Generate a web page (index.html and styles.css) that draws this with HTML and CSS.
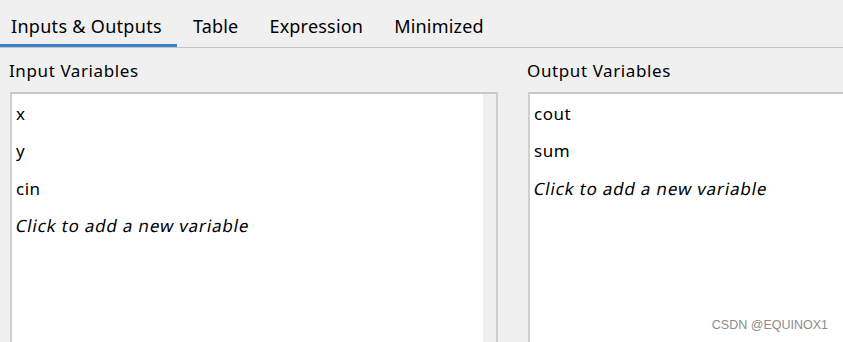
FILE: index.html
```html
<!DOCTYPE html>
<html lang="en">
<head>
    <meta charset="UTF-8">
    <meta name="viewport" content="width=device-width, initial-scale=1.0">
    <title>Inputs &amp; Outputs</title>
    <link rel="stylesheet" href="styles.css">
</head>
<body>

    <!-- Tabs -->
    <div class="tabs">
        <div class="tab active">Inputs &amp; Outputs</div>
        <div class="tab">Table</div>
        <div class="tab">Expression</div>
        <div class="tab">Minimized</div>
    </div>

    <!-- Variable Panels -->
    <div class="panels">
        <div class="panel">
            <div class="panel-label">Input Variables</div>
            <div class="var-box with-scroll">
                <div class="var-list">
                    <div class="var-row">x</div>
                    <div class="var-row">y</div>
                    <div class="var-row">cin</div>
                    <div class="var-row add"><span>Click to add a new variable</span></div>
                </div>
                <div class="scroll-track"></div>
            </div>
        </div>

        <div class="panel">
            <div class="panel-label">Output Variables</div>
            <div class="var-box open-right">
                <div class="var-list">
                    <div class="var-row">cout</div>
                    <div class="var-row">sum</div>
                    <div class="var-row add"><span>Click to add a new variable</span></div>
                </div>
            </div>
        </div>
    </div>

    <div class="watermark">CSDN @EQUINOX1</div>

</body>
</html>
```

FILE: styles.css
```css
/* Global */
* {
    margin: 0;
    padding: 0;
    box-sizing: border-box;
}

body {
    background: #f0f0f0;
    color: #000;
    font-family: "Noto Sans", "Open Sans", sans-serif;
    height: 342px;
    overflow: hidden;
    position: relative;
}

/* Tabs */
.tabs {
    display: flex;
    height: 48px;
    border-bottom: 1px solid #c4c4c4;
    margin-left: -5px;
}

.tab {
    font-size: 18px;
    line-height: 20px;
    letter-spacing: 0.2px;
    padding: 16px 15px 0 16px;
    height: 47px;
    border-bottom: 3px solid transparent;
}

.tab.active {
    border-bottom-color: #3d80c8;
    letter-spacing: 0.3px;
}

/* Panels */
.panels {
    display: grid;
    grid-template-columns: 488px 1fr;
    column-gap: 30px;
    padding: 13px 0 0 10px;
}

.panel-label {
    font-size: 17px;
    line-height: 20px;
    letter-spacing: 0.6px;
    margin: 0 0 11px -1px;
}

.var-box {
    display: flex;
    height: 251px;
    background: #fff;
    border: 2px solid #cfcfcf;
    border-top-color: #c8c8c8;
    border-bottom: none;
}

.var-box.open-right {
    border-right: none;
}

.var-list {
    flex: 1;
    padding-top: 1px;
}

.var-row {
    height: 37.4px;
    line-height: 37.4px;
    padding-left: 4px;
    font-size: 17px;
    letter-spacing: 0.5px;
}

/* slanted regular face, wider than the real italic */
.var-row.add span {
    display: inline-block;
    transform: skewX(-11deg);
    letter-spacing: 0.8px;
}

.scroll-track {
    width: 13px;
    background: #f0f0f0;
}

/* Watermark */
.watermark {
    position: absolute;
    right: 15px;
    bottom: 10px;
    font-family: "Liberation Sans", Arial, sans-serif;
    font-size: 12.5px;
    color: #8c8c8c;
}
```
